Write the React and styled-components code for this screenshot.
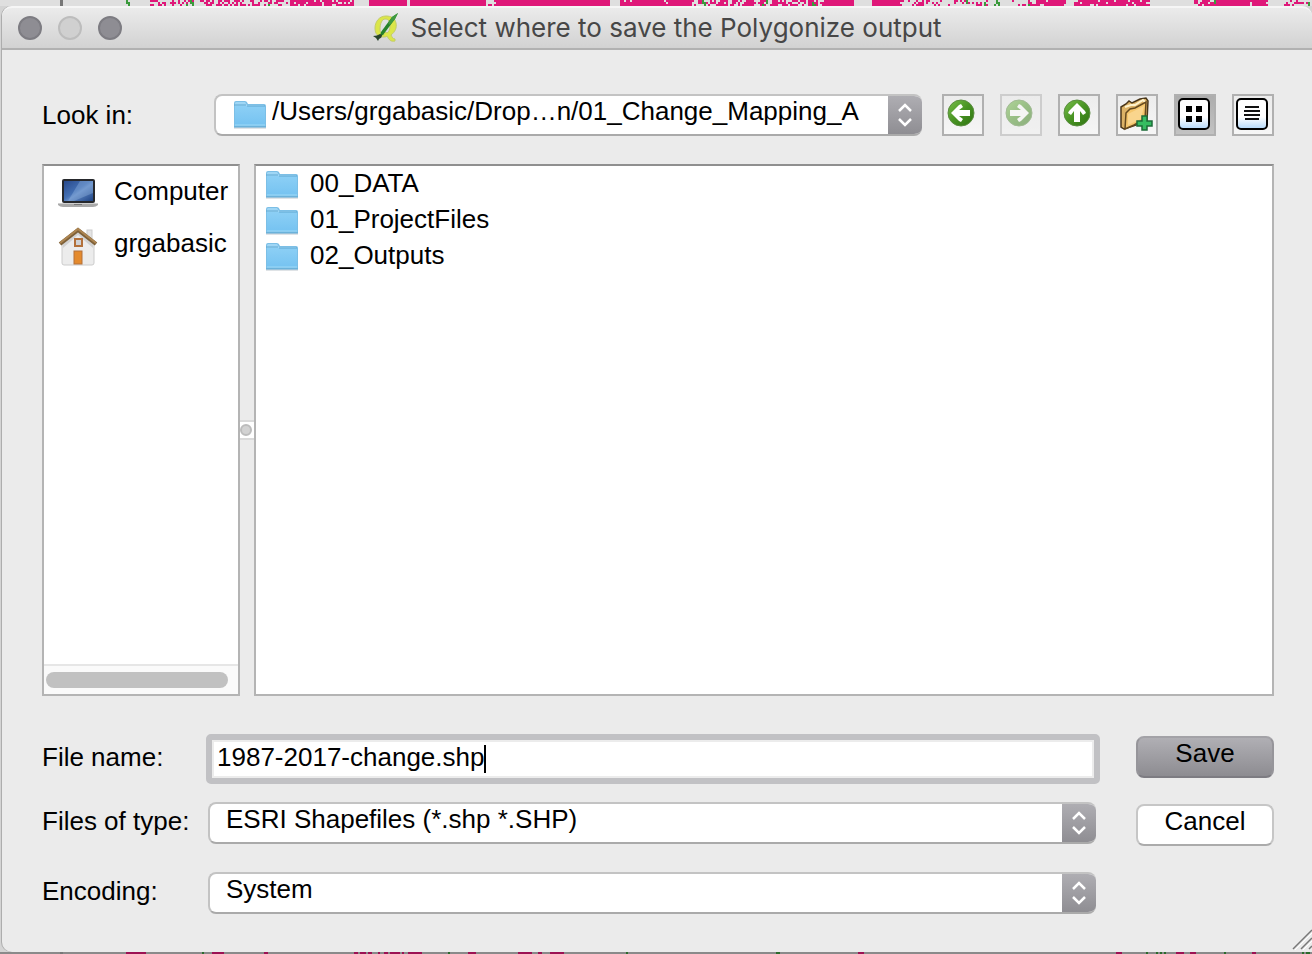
import React, { useState } from 'react';
import styled, { createGlobalStyle, css } from 'styled-components';

const GlobalStyle = createGlobalStyle`
  *, *::before { box-sizing: border-box; }
  body { margin: 0; background: #d4d4d4; }
  body, button, input, select {
    font-family: "Liberation Sans", Arial, sans-serif;
    font-size: 26px;
    line-height: 30px;
    color: #000;
  }
`;

const Desktop = styled.div`
  min-height: 100vh;
  display: flex;
  flex-direction: column;
  background: #d4d4d4;
`;

const MapStrip = styled.svg`
  display: block;
  width: 100%;
  flex: none;
  height: ${(p) => p.$height}px;
`;

const Window = styled.section`
  position: relative;
  flex: 1;
  display: flex;
  flex-direction: column;
  margin-left: 2px;
  background: #ebebeb;
  border-radius: 10px 10px 0 10px;
  box-shadow: -1px 0 0 #adadad;
`;

const TitleBar = styled.header`
  position: relative;
  display: flex;
  align-items: center;
  justify-content: center;
  gap: 10px;
  height: 44px;
  border-top: 2px solid #f6f6f6;
  border-bottom: 2px solid #b1b1b1;
  border-radius: 10px 10px 0 0;
  background: linear-gradient(#ebebeb, #d2d2d2);
`;

const Lights = styled.div`
  position: absolute;
  left: 16px;
  top: 8px;
  display: flex;
  gap: 16px;
`;

const Light = styled.button`
  width: 24px;
  height: 24px;
  padding: 0;
  border-radius: 50%;
  border: 2px solid ${(p) => (p.$dim ? '#bdbdbd' : '#7d7c82')};
  background: ${(p) => (p.$dim ? '#d0d0d0' : '#8e8d93')};
`;

const Title = styled.h1`
  margin: 0;
  font: 400 26px/30px Inter, Roboto, sans-serif;
  color: #474747;
`;

const Body = styled.main`
  flex: 1;
  display: flex;
  flex-direction: column;
  padding: 44px 38px 38px 40px;
`;

const LookInRow = styled.div`
  display: flex;
  align-items: center;
  gap: 20px;
`;

const Label = styled.label`
  flex: none;
  width: ${(p) => p.$width}px;
  white-space: nowrap;
`;

const Combo = styled.div`
  flex: 1;
  min-width: 0;
  height: 42px;
  display: flex;
  align-items: stretch;
  padding-left: ${(p) => (p.$icon ? 18 : 16)}px;
  border: 2px solid #c3c3c3;
  border-bottom-color: #aaa;
  border-right: 0;
  border-radius: 8px;
  background: #fff;
  overflow: hidden;
`;

const ComboIcon = styled.span`
  flex: none;
  display: flex;
  align-items: center;
`;

const ComboSelect = styled.select`
  flex: 1;
  min-width: 0;
  appearance: none;
  border: 0;
  outline: 0;
  padding: 0 0 8px ${(p) => (p.$icon ? 6 : 0)}px;
  background: transparent;
`;

const Stepper = styled.span`
  flex: none;
  width: 34px;
  margin: -2px 0;
  display: flex;
  align-items: center;
  justify-content: center;
  background: linear-gradient(#b0afb4, #8d8c91);
`;

const Tools = styled.div`
  display: flex;
  gap: 16px;
`;

const ToolButton = styled.button`
  width: 42px;
  height: 42px;
  padding: 0;
  border: 2px solid #b0b0b0;
  background: ${(p) => (p.$active ? 'linear-gradient(#adadad, #c2c2c2)' : 'linear-gradient(#ececec, #f6f6f6)')};
  ${(p) => p.disabled && css`
    opacity: 0.5;
  `}
  svg { display: block; }
`;

const Browser = styled.div`
  flex: 1;
  display: flex;
  margin-top: 28px;
`;

const panel = css`
  border: 2px solid #b4b4b4;
  border-top-color: #8f8f8f;
  background: #fff;
`;

const Sidebar = styled.nav`
  ${panel}
  flex: none;
  width: 198px;
  display: flex;
  flex-direction: column;
`;

const List = styled.ul`
  flex: 1;
  margin: 0;
  padding: 0;
  list-style: none;
`;

const Place = styled.li`
  display: flex;
  align-items: center;
  gap: 16px;
  height: 52px;
  padding: 0 0 2px 14px;
  svg { flex: none; margin-top: 6px; }
`;

const FilePanel = styled.div`
  ${panel}
  flex: 1;
`;

const FileItem = styled.li`
  display: flex;
  align-items: center;
  gap: 12px;
  height: 36px;
  padding: 0 0 2px 10px;
  svg { flex: none; margin-top: 4px; }
`;

const ScrollTrack = styled.div`
  height: 30px;
  padding: 6px 10px 0 2px;
  border-top: 2px solid #e6e6e6;
  background: #fafafa;
`;

const ScrollThumb = styled.div`
  height: 16px;
  border-radius: 8px;
  background: #c1c1c1;
`;

const Splitter = styled.div`
  flex: none;
  width: 14px;
  display: flex;
  align-items: center;
`;

const Handle = styled.div`
  width: 14px;
  height: 20px;
  padding-top: 2px;
  border: solid #dadada;
  border-width: 2px 0;
  background: #fff;
  &::before {
    content: "";
    display: block;
    width: 12px;
    height: 12px;
    border-radius: 50%;
    border: 2px solid #bcbcbc;
    background: #d2d2d2;
  }
`;

const Form = styled.form`
  display: flex;
  gap: 36px;
  margin-top: 38px;
`;

const Fields = styled.div`
  flex: 1;
`;

const FieldRow = styled.div`
  display: flex;
  align-items: center;
  padding-right: ${(p) => (p.$combo ? 4 : 0)}px;
  margin-top: ${(p) => p.$top || 0}px;
  ${Label} { padding-bottom: 4px; }
`;

const NameInput = styled.input`
  flex: 1;
  min-width: 0;
  height: 50px;
  padding: 0 5px 4px;
  border: 6px solid #c1c1c4;
  border-radius: 5px;
  outline: 0;
  background: linear-gradient(#000, #000) 272px 5px / 2px 28px no-repeat #fff;
  box-shadow: inset 0 0 0 2px #ececec;
`;

const Actions = styled.div`
  flex: none;
  width: 138px;
  display: flex;
  flex-direction: column;
  gap: 26px;
  padding-top: 2px;
`;

const ActionButton = styled.button`
  height: 42px;
  padding: 0 0 8px;
  border: 2px solid #c6c6c6;
  border-bottom-color: #ababab;
  border-radius: 8px;
  background: #fff;
  ${(p) => p.$primary && css`
    border-color: #a3a2a7 #96959a #7d7c82;
    background: linear-gradient(#b0afb4, #8d8c91);
  `}
`;

const Grip = styled.svg`
  position: absolute;
  right: 0;
  bottom: 1px;
`;

/* Coverage of the raster behind the dialog: [start, end, density] */
const topBands = [
  [150, 166, 0.6], [166, 204, 0.35], [204, 250, 0.6], [250, 290, 0.5], [290, 354, 0.85],
  [369, 406, 1], [410, 486, 1], [486, 496, 0.4], [496, 610, 1], [620, 692, 0.96],
  [692, 716, 0.3], [716, 780, 0.65], [780, 824, 0.6], [824, 854, 1], [872, 900, 1],
  [900, 926, 0.5], [926, 990, 0.3], [1010, 1036, 0.3], [1036, 1066, 0.9], [1074, 1150, 0.9],
  [1194, 1214, 0.7], [1214, 1268, 0.95], [1284, 1312, 0.3],
];
const bottomBands = [
  [126, 146, 1], [212, 224, 1], [264, 268, 1], [354, 372, 0.9], [378, 404, 0.8], [408, 422, 1],
  [468, 476, 1], [518, 532, 1], [538, 542, 1], [550, 564, 1], [858, 864, 1],
  [1116, 1122, 1], [1176, 1184, 1], [1190, 1200, 0.6], [1252, 1256, 1],
];
const topGreens = [126, 128, 186, 190, 192, 268, 702, 704, 762, 766, 812, 814, 966, 984, 994, 996, 998, 1028, 1214, 1308];
const bottomGreens = [202, 448, 626, 776, 778, 1146, 1156, 1160, 1164, 1224, 1302, 1306, 1308];

function RasterStrip({ height, bands, greens, base, pink, green }) {
  let seed = 7;
  const random = () => {
    seed = (seed * 16807) % 2147483647;
    return seed / 2147483647;
  };
  const cells = [];
  bands.forEach(([from, to, density]) => {
    for (let x = from; x < to; x += 2) {
      for (let y = 0; y < height; y += 2) {
        if (random() < density) cells.push(<rect key={`${x}-${y}`} x={x} y={y} width="2" height="2" fill={pink} />);
      }
    }
  });
  return (
    <MapStrip $height={height} viewBox={`0 0 1312 ${height}`} preserveAspectRatio="none" shapeRendering="crispEdges" aria-hidden="true">
      <rect width="1312" height={height} fill={base} />
      <rect x="60" width="3" height={height} fill="#777" />
      {cells}
      {greens.map((x, i) => (
        <rect key={x} x={x} y={height > 2 ? (i % 3) * 2 : 0} width="2" height={height > 2 ? 4 : 2} fill={green} />
      ))}
    </MapStrip>
  );
}

const Logo = () => (
  <svg width="28" height="32" viewBox="0 0 28 32" aria-hidden="true">
    <path fillRule="evenodd" fill="#dbe649" stroke="#c3cc6a" strokeWidth="1" d="M14 4C7 4 3 10 3 16c0 6 3 9 8 9 2 0 3 0 4-1 2 4 4 6 8 5v-2c-2 0-3-2-4-4 4-3 6-7 5-12C23 6 19 4 14 4zM13 7c4 0 5 3 5 7 0 3-1 6-3 7-1-1-3-1-4 0l1 2c-3 0-4-3-4-6 0-5 2-10 5-10z" />
    <path d="M26 1l-3 6-12 16-3 1 1-4L20 5z" fill="#25832a" />
    <path d="M26 1l-6 4-4 6 2 2 5-6z" fill="#3f9a3f" />
    <path d="M8 22c-2 1-4 2-7 2l3 2 2 3 1-2c2-1 3-2 3-4z" fill="#27432b" />
  </svg>
);

const Folder = () => (
  <svg width="32" height="30" viewBox="0 0 32 30" aria-hidden="true">
    <defs>
      <linearGradient id="folderFace" x1="0" y1="0" x2="0" y2="1">
        <stop offset="0" stopColor="#8ccff5" />
        <stop offset="1" stopColor="#76c3f1" />
      </linearGradient>
    </defs>
    <path d="M0 27h32v2H0z" fill="#dfe3e6" />
    <path d="M0 3q0-2 2-2h9q2 0 3 3h16q2 0 2 2v21H0z" fill="#7cbfe6" />
    <path d="M2 2h9l2 3h17v1H1V3z" fill="#9fd6f5" />
    <path d="M1 6h30v19H1z" fill="url(#folderFace)" />
    <path d="M0 5h12M13 6h18" stroke="#5fa8d2" strokeWidth="1" />
    <path d="M1 25h30" stroke="#9ddaf8" strokeWidth="1" />
    <path d="M0 27h32" stroke="#5ba4cf" strokeWidth="1" />
  </svg>
);

const Laptop = () => (
  <svg width="40" height="32" viewBox="0 0 40 32" aria-hidden="true">
    <defs>
      <linearGradient id="screen" x1="0" y1="0" x2="1" y2="1">
        <stop offset="0" stopColor="#28498b" />
        <stop offset="0.45" stopColor="#4470b4" />
        <stop offset="0.55" stopColor="#6088c4" />
        <stop offset="1" stopColor="#1d4384" />
      </linearGradient>
    </defs>
    <rect x="4" y="1" width="33" height="24" rx="2" fill="#26282c" />
    <rect x="6" y="3" width="29" height="20" fill="url(#screen)" />
    <path d="M22 3h13v12L16 23h-6z" fill="#9bbce5" opacity=".35" />
    <path d="M0 25h40v2q-2 2-5 2H5q-3 0-5-2z" fill="#a9a9a9" />
    <path d="M0 25h40v1H0z" fill="#cfcfcf" />
    <path d="M16 26h8v1h-8z" fill="#777" />
  </svg>
);

const House = () => (
  <svg width="40" height="40" viewBox="0 0 40 40" aria-hidden="true">
    <rect x="29" y="4" width="5" height="10" fill="#e4e4e4" stroke="#cccccc" />
    <path d="M4 17L20 4l16 13v20q0 2-2 2H6q-2 0-2-2z" fill="#ececec" stroke="#cccccc" />
    <path d="M5 18L20 6l15 12v4L20 9 5 22z" fill="#d2d2d2" />
    <path d="M2 18L20 4l18 14" fill="none" stroke="#7d6038" strokeWidth="4" />
    <path d="M2 17L20 3l18 14" fill="none" stroke="#ad8551" strokeWidth="2" />
    <rect x="17" y="13" width="7" height="7" fill="#cfd2d6" stroke="#b3703a" strokeWidth="2" />
    <rect x="16" y="25" width="8" height="13" fill="#e48a2d" stroke="#b3703a" />
  </svg>
);

const arrowTurn = { left: 0, up: 90, right: 180 };

const Arrow = ({ to }) => (
  <svg width="38" height="38" viewBox="0 0 38 38" aria-hidden="true">
    <defs>
      <linearGradient id="ball" x1="0" y1="0" x2="1" y2="1">
        <stop offset="0" stopColor="#79c04a" />
        <stop offset="0.5" stopColor="#489323" />
        <stop offset="1" stopColor="#2f7411" />
      </linearGradient>
    </defs>
    <circle cx="17" cy="17" r="13" fill="url(#ball)" stroke="#5a8c40" />
    <path
      transform={`rotate(${arrowTurn[to]} 17 17)`}
      d="M7 17l8-8 2-1 2 3-4 3h11v6H15l4 3-2 3-2-1z"
      fill="#fff"
    />
  </svg>
);

const NewFolder = () => (
  <svg width="38" height="38" viewBox="0 0 38 38" aria-hidden="true">
    <path d="M3 11l5-3 3-3 3 2 8-4 6-1 2 3-1 20-14 5-9 3-3-2z" fill="#dcb266" stroke="#49361a" strokeWidth="1.500" />
    <path d="M7 11l6-2 4 0 8-5 2 2" fill="none" stroke="#fff3cc" strokeWidth="2" />
    <path d="M8 17l4-4 5-1 11-6-1 17-11 6-9 4z" fill="#f5c66c" stroke="#65491e" strokeWidth="1.500" />
    <path d="M10 18l16-8-3 13-13 6z" fill="#fbdda0" opacity=".65" />
    <path d="M24 20h5v5h5v5h-5v4h-5v-4h-5v-5h5z" fill="#35bd61" stroke="#1d6c38" strokeWidth="1.500" />
  </svg>
);

const ViewIcon = ({ children }) => (
  <svg width="38" height="38" viewBox="0 0 38 38" aria-hidden="true">
    <defs>
      <linearGradient id="tile" x1="0" y1="0" x2="0" y2="1">
        <stop offset="0.6" stopColor="#fff" />
        <stop offset="1" stopColor="#b3d8fa" />
      </linearGradient>
    </defs>
    <rect x="3" y="3" width="30" height="30" rx="4" fill="url(#tile)" stroke="#000" strokeWidth="2" />
    {children}
  </svg>
);

const Chevrons = () => (
  <Stepper aria-hidden="true">
    <svg width="16" height="24" viewBox="0 0 16 24">
      <path d="M2 8l6-6 6 6M2 16l6 6 6-6" fill="none" stroke="#fff" strokeWidth="2.500" />
    </svg>
  </Stepper>
);

function ComboBox({ id, value, icon }) {
  return (
    <Combo $icon={!!icon}>
      {icon && <ComboIcon><Folder /></ComboIcon>}
      <ComboSelect id={id} $icon={!!icon} defaultValue={value}>
        <option value={value}>{value}</option>
      </ComboSelect>
      <Chevrons />
    </Combo>
  );
}

const files = ['00_DATA', '01_ProjectFiles', '02_Outputs'];

export default function App() {
  const [name, setName] = useState('1987-2017-change.shp');
  return (
    <Desktop>
      <GlobalStyle />
      <RasterStrip height={6} bands={topBands} greens={topGreens} base="#dfdfdf" pink="#df1879" green="#3b9a3c" />
      <Window>
        <TitleBar>
          <Lights>
            <Light type="button" aria-label="Close" />
            <Light type="button" aria-label="Minimize" $dim />
            <Light type="button" aria-label="Zoom" />
          </Lights>
          <Logo />
          <Title>Select where to save the Polygonize output</Title>
        </TitleBar>
        <Body>
          <LookInRow>
            <Label htmlFor="look-in" $width={152}>Look in:</Label>
            <ComboBox id="look-in" value="/Users/grgabasic/Drop…n/01_Change_Mapping_A" icon />
            <Tools>
              <ToolButton type="button" aria-label="Back"><Arrow to="left" /></ToolButton>
              <ToolButton type="button" aria-label="Forward" disabled><Arrow to="right" /></ToolButton>
              <ToolButton type="button" aria-label="Parent directory"><Arrow to="up" /></ToolButton>
              <ToolButton type="button" aria-label="Create new folder"><NewFolder /></ToolButton>
              <ToolButton type="button" aria-label="List view" $active>
                <ViewIcon>
                  <path d="M10 10h6v6h-6zM20 10h6v6h-6zM10 20h6v6h-6zM20 20h6v6h-6z" />
                </ViewIcon>
              </ToolButton>
              <ToolButton type="button" aria-label="Detail view">
                <ViewIcon>
                  <path d="M11 11h14M10 15h16M10 19h16M11 23h14" stroke="#111" strokeWidth="2" />
                </ViewIcon>
              </ToolButton>
            </Tools>
          </LookInRow>
          <Browser>
            <Sidebar aria-label="Places">
              <List>
                <Place><Laptop />Computer</Place>
                <Place><House />grgabasic</Place>
              </List>
              <ScrollTrack><ScrollThumb /></ScrollTrack>
            </Sidebar>
            <Splitter><Handle /></Splitter>
            <FilePanel>
              <List>
                {files.map((file) => (
                  <FileItem key={file}><Folder />{file}</FileItem>
                ))}
              </List>
            </FilePanel>
          </Browser>
          <Form onSubmit={(e) => e.preventDefault()}>
            <Fields>
              <FieldRow>
                <Label htmlFor="file-name" $width={164}>File name:</Label>
                <NameInput id="file-name" value={name} onChange={(e) => setName(e.target.value)} />
              </FieldRow>
              <FieldRow $combo $top={18}>
                <Label htmlFor="file-type" $width={166}>Files of type:</Label>
                <ComboBox id="file-type" value="ESRI Shapefiles (*.shp *.SHP)" />
              </FieldRow>
              <FieldRow $combo $top={28}>
                <Label htmlFor="encoding" $width={166}>Encoding:</Label>
                <ComboBox id="encoding" value="System" />
              </FieldRow>
            </Fields>
            <Actions>
              <ActionButton $primary type="submit">Save</ActionButton>
              <ActionButton type="button">Cancel</ActionButton>
            </Actions>
          </Form>
        </Body>
        <Grip width="20" height="22" viewBox="0 0 20 22" aria-hidden="true">
          <path d="M1 20L20 1M9 20L20 9M17 20l3-3" stroke="#777" strokeWidth="1.500" />
          <path d="M3 21L20 4M11 21l9-9" stroke="#fff" />
        </Grip>
      </Window>
      <RasterStrip height={2} bands={bottomBands} greens={bottomGreens} base="#8a8a8a" pink="#9c1153" green="#2c6b2c" />
    </Desktop>
  );
}
